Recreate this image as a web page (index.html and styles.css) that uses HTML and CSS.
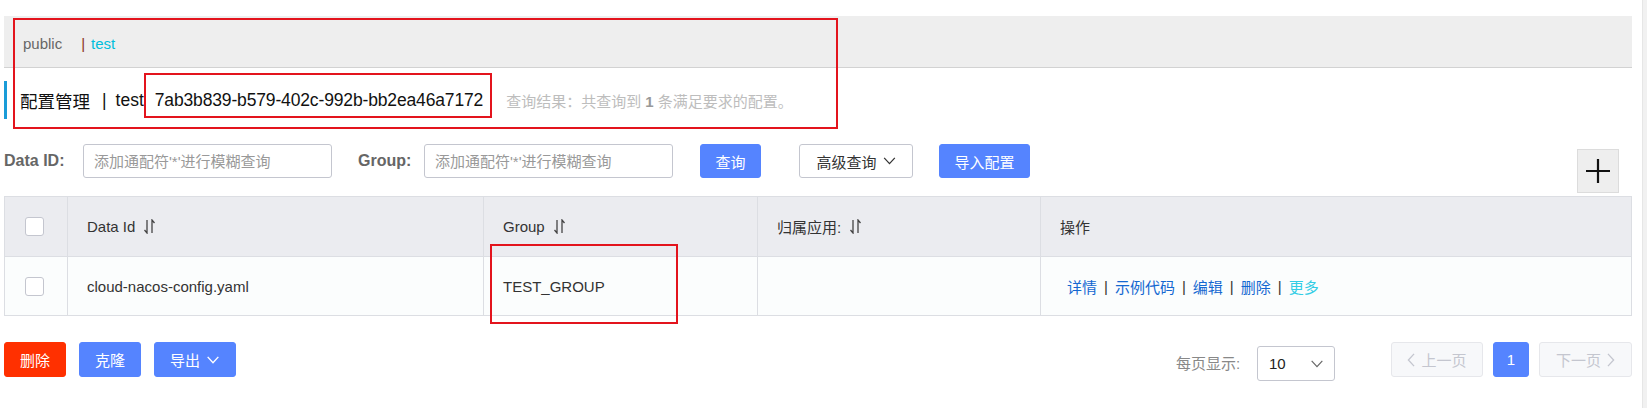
FILE: index.html
```html
<!DOCTYPE html>
<html lang="zh-CN">
<head>
<meta charset="utf-8">
<title>配置管理</title>
<link rel="stylesheet" href="styles.css">
</head>
<body>
<div class="page">
  <div class="main">
    <div class="crumbs">
      <span class="ns">public</span><span class="ns-sep">|</span><span class="ns ns-active">test</span>
    </div>

    <div class="title-row">
      <span class="title">配置管理</span><span class="title-sep">|</span><span class="title">test</span><span class="title-id">7ab3b839-b579-402c-992b-bb2ea46a7172</span>
      <span class="result">查询结果：共查询到 <b>1</b> 条满足要求的配置。</span>
    </div>

    <div class="search">
      <label class="label label-id">Data ID:</label>
      <input class="input" type="text" placeholder="添加通配符'*'进行模糊查询">
      <label class="label label-group">Group:</label>
      <input class="input" type="text" placeholder="添加通配符'*'进行模糊查询">
      <button class="btn btn-primary btn-query">查询</button>
      <button class="btn btn-normal btn-adv">高级查询<svg class="chev" viewBox="0 0 14 9" width="13" height="8"><path d="M1 1 L7 7.5 L13 1" fill="none" stroke="#333" stroke-width="1.4"/></svg></button>
      <button class="btn btn-primary btn-import">导入配置</button>
      <button class="btn-plus" aria-label="add"><svg viewBox="0 0 26 26" width="26" height="26"><path d="M13 1 V25 M1 13 H25" stroke="#111" stroke-width="2.2"/></svg></button>
    </div>

    <div class="grid">
      <div class="cell head cb-cell"><span class="checkbox"></span></div>
      <div class="cell head">Data Id<svg class="sort" viewBox="0 0 11 15" width="11" height="15"><path d="M3 1 V14 L0.5 11 M8 14 V1 L10.5 4" fill="none" stroke="#444" stroke-width="1.3"/></svg></div>
      <div class="cell head">Group<svg class="sort" viewBox="0 0 11 15" width="11" height="15"><path d="M3 1 V14 L0.5 11 M8 14 V1 L10.5 4" fill="none" stroke="#444" stroke-width="1.3"/></svg></div>
      <div class="cell head">归属应用:<svg class="sort" viewBox="0 0 11 15" width="11" height="15"><path d="M3 1 V14 L0.5 11 M8 14 V1 L10.5 4" fill="none" stroke="#444" stroke-width="1.3"/></svg></div>
      <div class="cell head">操作</div>

      <div class="cell body cb-cell"><span class="checkbox"></span></div>
      <div class="cell body">cloud-nacos-config.yaml</div>
      <div class="cell body">TEST_GROUP</div>
      <div class="cell body"></div>
      <div class="cell body ops">
        <a class="link">详情</a><span class="op-sep">|</span><a class="link">示例代码</a><span class="op-sep">|</span><a class="link">编辑</a><span class="op-sep">|</span><a class="link">删除</a><span class="op-sep">|</span><a class="link link-more">更多</a>
      </div>
    </div>

    <div class="footer">
      <button class="btn btn-danger btn-del">删除</button>
      <button class="btn btn-primary btn-clone">克隆</button>
      <button class="btn btn-primary btn-export">导出<svg class="chev" viewBox="0 0 14 9" width="14" height="8"><path d="M1 1 L7 7.5 L13 1" fill="none" stroke="#fff" stroke-width="1.6"/></svg></button>

      <div class="pager">
        <span class="page-size-label">每页显示:</span>
        <div class="select"><span class="select-val">10</span><svg viewBox="0 0 14 9" width="14" height="8"><path d="M1 1 L7 7.5 L13 1" fill="none" stroke="#666" stroke-width="1.3"/></svg></div>
        <button class="pg pg-disabled pg-prev"><svg viewBox="0 0 9 16" width="8" height="14"><path d="M8 1 L1.5 8 L8 15" fill="none" stroke="#c4c6cf" stroke-width="1.5"/></svg>上一页</button>
        <button class="pg pg-current">1</button>
        <button class="pg pg-disabled pg-next">下一页<svg viewBox="0 0 9 16" width="8" height="14"><path d="M1 1 L7.5 8 L1 15" fill="none" stroke="#c4c6cf" stroke-width="1.5"/></svg></button>
      </div>
    </div>

    <div class="mark mark-top"></div>
    <div class="mark mark-id"></div>
    <div class="mark mark-group"></div>
  </div>
  <div class="scrollbar"></div>
</div>
</body>
</html>
```

FILE: styles.css
```css
* { box-sizing: border-box; }

body {
  margin: 0;
  font-family: "Liberation Sans", "Noto Sans CJK SC", sans-serif;
  font-size: 15px;
  color: #333;
  background: #fff;
}

.page {
  display: flex;
  width: 1647px;
  height: 408px;
  overflow: hidden;
}

.main {
  position: relative;
  width: 1642px;
  padding: 16px 10px 0 4px;
}

.scrollbar {
  width: 5px;
  background: #f1f1f1;
  border-left: 1px solid #e6e6e6;
}

/* namespace crumbs */
.crumbs {
  height: 52px;
  background: #eeeeee;
  border-bottom: 1px solid #d2d2d2;
  display: flex;
  align-items: center;
  padding: 4px 0 0 19px;
  font-size: 15px;
}
.ns { color: #666; }
.ns-sep { color: #8b3322; margin: 0 6px 0 19px; }
.ns-active { color: #00bfdc; }

/* title */
.title-row {
  margin-top: 13px;
  height: 38px;
  border-left: 3px solid #1a9cd8;
  display: flex;
  align-items: center;
  padding-left: 13px;
  color: #111;
  font-size: 17.5px;
}
.title-sep { margin: 0 9px 0 12px; }
.title-id { margin-left: 11px; letter-spacing: -0.15px; }
.result {
  margin-left: 23px;
  font-size: 15px;
  color: #bdbdbd;
}
.result b { color: #999; }

/* search */
.search {
  margin-top: 25px;
  display: flex;
  align-items: flex-start;
}
.label {
  font-weight: bold;
  font-size: 16px;
  color: #666;
  line-height: 34px;
}
.label-id { width: 79px; }
.label-group { margin-left: 26px; width: 66px; }
.input {
  width: 249px;
  height: 34px;
  border: 1px solid #c4c6cf;
  border-radius: 3px;
  padding: 0 10px;
  font-family: "Liberation Sans", "Noto Sans CJK SC", sans-serif;
  font-size: 15px;
  color: #333;
  outline: none;
  background: #fff;
}
.input::placeholder { color: #999; }

.btn {
  height: 34px;
  border-radius: 3px;
  font-family: "Liberation Sans", "Noto Sans CJK SC", sans-serif;
  font-size: 15px;
  padding: 0;
  display: inline-flex;
  align-items: center;
  justify-content: center;
  cursor: pointer;
}
.btn-primary { background: #5584ff; border: 1px solid #5584ff; color: #fff; }
.btn-danger { background: #ff3000; border: 1px solid #ff3000; color: #fff; }
.btn-normal { background: #fff; border: 1px solid #c4c6cf; color: #333; }
.chev { margin-left: 6px; }

.btn-query { margin-left: 27px; width: 61px; }
.btn-adv { margin-left: 38px; width: 114px; }
.btn-import { margin-left: 26px; width: 91px; }
.btn-plus {
  margin-left: auto;
  margin-right: 13px;
  margin-top: 5px;
  width: 42px;
  height: 44px;
  background: #eeeeee;
  border: 1px solid #dcdcdc;
  display: flex;
  align-items: center;
  justify-content: center;
  padding: 0;
}

/* table */
.grid {
  margin-top: 3px;
  width: 1628px;
  display: grid;
  grid-template-columns: 62px 416px 274px 283px 591px;
  border: 1px solid #dcdee3;
}
.cell {
  display: flex;
  align-items: center;
  padding-left: 19px;
  font-size: 15px;
  color: #333;
}
.cell + .cell { border-left: 1px solid #dcdee3; }
.cell.cb-cell { border-left: none; padding-left: 20px; }
.head {
  height: 60px;
  background: #ebecf0;
  border-bottom: 1px solid #dcdee3;
}
.body {
  height: 58px;
  background: #fbfdfd;
}
.checkbox {
  width: 19px;
  height: 19px;
  border: 1px solid #c4c6cf;
  border-radius: 3px;
  background: #fff;
}
.sort { margin-left: 9px; }

.ops { padding-left: 26px; }
.link { color: #1468d1; cursor: pointer; }
.link-more { color: #33cde5; }
.op-sep { color: #333; margin: 0 7px; }

/* footer */
.footer {
  margin-top: 26px;
  display: flex;
  align-items: flex-start;
}
.footer .btn { height: 35px; }
.btn-del { width: 62px; }
.btn-clone { margin-left: 13px; width: 62px; }
.btn-export { margin-left: 13px; width: 82px; }

.pager {
  margin-left: auto;
  display: flex;
  align-items: flex-start;
}
.page-size-label {
  color: #888;
  font-size: 15px;
  line-height: 35px;
  margin-top: 4px;
  width: 81px;
}
.select {
  margin-top: 4px;
  width: 78px;
  height: 35px;
  border: 1px solid #c4c6cf;
  border-radius: 3px;
  display: flex;
  align-items: center;
  justify-content: space-between;
  padding: 0 10px 0 11px;
  background: #fff;
}
.select-val { font-size: 15px; color: #222; }

.pg {
  height: 35px;
  border-radius: 3px;
  font-family: "Liberation Sans", "Noto Sans CJK SC", sans-serif;
  font-size: 15px;
  display: inline-flex;
  align-items: center;
  justify-content: center;
  padding: 0;
}
.pg-disabled {
  background: #f7f8fa;
  border: 1px solid #e6e7eb;
  color: #c4c6cf;
}
.pg-prev { margin-left: 56px; width: 92px; }
.pg-prev svg { margin-right: 6px; }
.pg-next { margin-left: 10px; width: 93px; }
.pg-next svg { margin-left: 6px; }
.pg-current {
  margin-left: 10px;
  width: 36px;
  background: #5584ff;
  border: 1px solid #5584ff;
  color: #fff;
}

/* red annotation rectangles laid over the screenshot */
.mark {
  position: absolute;
  border: 2px solid #e3141d;
  pointer-events: none;
}
.mark-top { left: 13px; top: 18px; width: 825px; height: 111px; }
.mark-id { left: 144px; top: 73px; width: 348px; height: 45px; }
.mark-group { left: 490px; top: 244px; width: 188px; height: 80px; }
```
